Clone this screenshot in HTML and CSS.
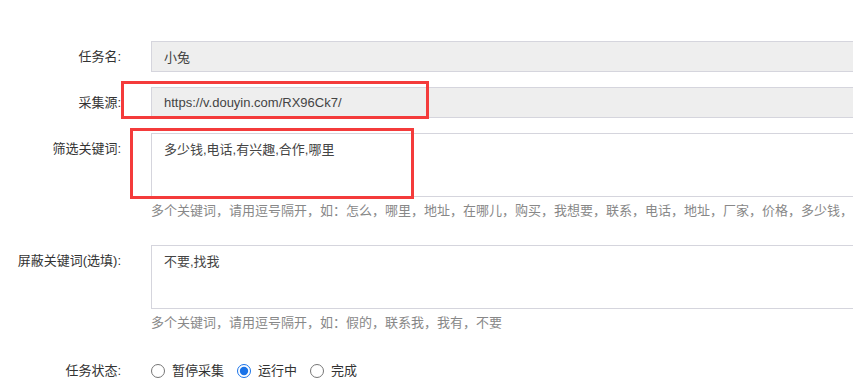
FILE: index.html
```html
<!DOCTYPE html>
<html lang="zh">
<head>
<meta charset="utf-8">
<title>任务</title>
<link rel="stylesheet" href="styles.css">
</head>
<body>
<div class="page">
  <form class="form">
    <div class="row row-first">
      <label class="label">任务名:</label>
      <input class="field field-readonly" type="text" value="小兔" readonly spellcheck="false">
    </div>
    <div class="row row-gap">
      <label class="label">采集源:</label>
      <input class="field field-readonly" type="text" value="https://v.douyin.com/RX96Ck7/" readonly spellcheck="false">
    </div>
    <div class="row row-gap">
      <label class="label">筛选关键词:</label>
      <textarea class="area" spellcheck="false">多少钱,电话,有兴趣,合作,哪里</textarea>
    </div>
    <div class="hint">多个关键词，请用逗号隔开，如：怎么，哪里，地址，在哪儿，购买，我想要，联系，电话，地址，厂家，价格，多少钱，</div>
    <div class="row row-area2">
      <label class="label">屏蔽关键词(选填):</label>
      <textarea class="area" spellcheck="false">不要,找我</textarea>
    </div>
    <div class="hint">多个关键词，请用逗号隔开，如：假的，联系我，我有，不要</div>
    <div class="row row-status">
      <label class="label label-status">任务状态:</label>
      <div class="radios">
        <label class="radio"><input type="radio" name="status"><span>暂停采集</span></label>
        <label class="radio"><input type="radio" name="status" checked><span>运行中</span></label>
        <label class="radio"><input type="radio" name="status"><span>完成</span></label>
      </div>
    </div>
  </form>
  <div class="mark mark-source"></div>
  <div class="mark mark-keywords"></div>
</div>
</body>
</html>
```

FILE: styles.css
```css
* { box-sizing: border-box; }
html, body {
  margin: 0;
  padding: 0;
  background: #fff;
  overflow: hidden;
}
body {
  font-family: "Liberation Sans", Arial, "Noto Sans CJK SC", sans-serif;
  font-size: 13px;
  color: #333;
}
.page {
  position: relative;
  width: 853px;
  height: 390px;
  overflow: hidden;
}
.form {
  display: flex;
  flex-direction: column;
}
.row {
  display: flex;
  align-items: flex-start;
}
.row-first { margin-top: 41px; }
.row-gap { margin-top: 15px; }
.row-area2 { margin-top: 24px; }
.row-status { margin-top: 28px; }
.label {
  flex: 0 0 121px;
  text-align: right;
  line-height: 31px;
  color: #333;
  white-space: nowrap;
}
.label-status { line-height: 20px; }
.field {
  margin-left: 30px;
  width: 760px;
  flex: 0 0 760px;
  height: 31px;
  border: 1px solid #d5d5dd;
  padding: 0 12px;
  font: inherit;
  color: #444;
  outline: none;
}
.field-readonly { background: #eeeeee; }
.area {
  margin-left: 30px;
  flex: 0 0 760px;
  width: 760px;
  height: 64px;
  border: 1px solid #d5d5dd;
  padding: 8px 12px;
  font: inherit;
  line-height: 15px;
  color: #444;
  resize: none;
  outline: none;
  background: #fff;
}
.hint {
  margin-left: 151px;
  margin-top: 4px;
  line-height: 20px;
  color: #888;
  white-space: nowrap;
}
.radios {
  margin-left: 30px;
  display: flex;
  align-items: center;
  gap: 13px;
  line-height: 20px;
}
.radio {
  display: flex;
  align-items: center;
  color: #333;
}
.radio input {
  margin: 0 7px 0 0;
  width: 14px;
  height: 14px;
  accent-color: #1a73e8;
}
.mark {
  position: absolute;
  border: 3px solid #f43b3b;
}
.mark-source {
  left: 121px;
  top: 81px;
  width: 308px;
  height: 38px;
}
.mark-keywords {
  left: 130px;
  top: 128px;
  width: 284px;
  height: 71px;
}
```
